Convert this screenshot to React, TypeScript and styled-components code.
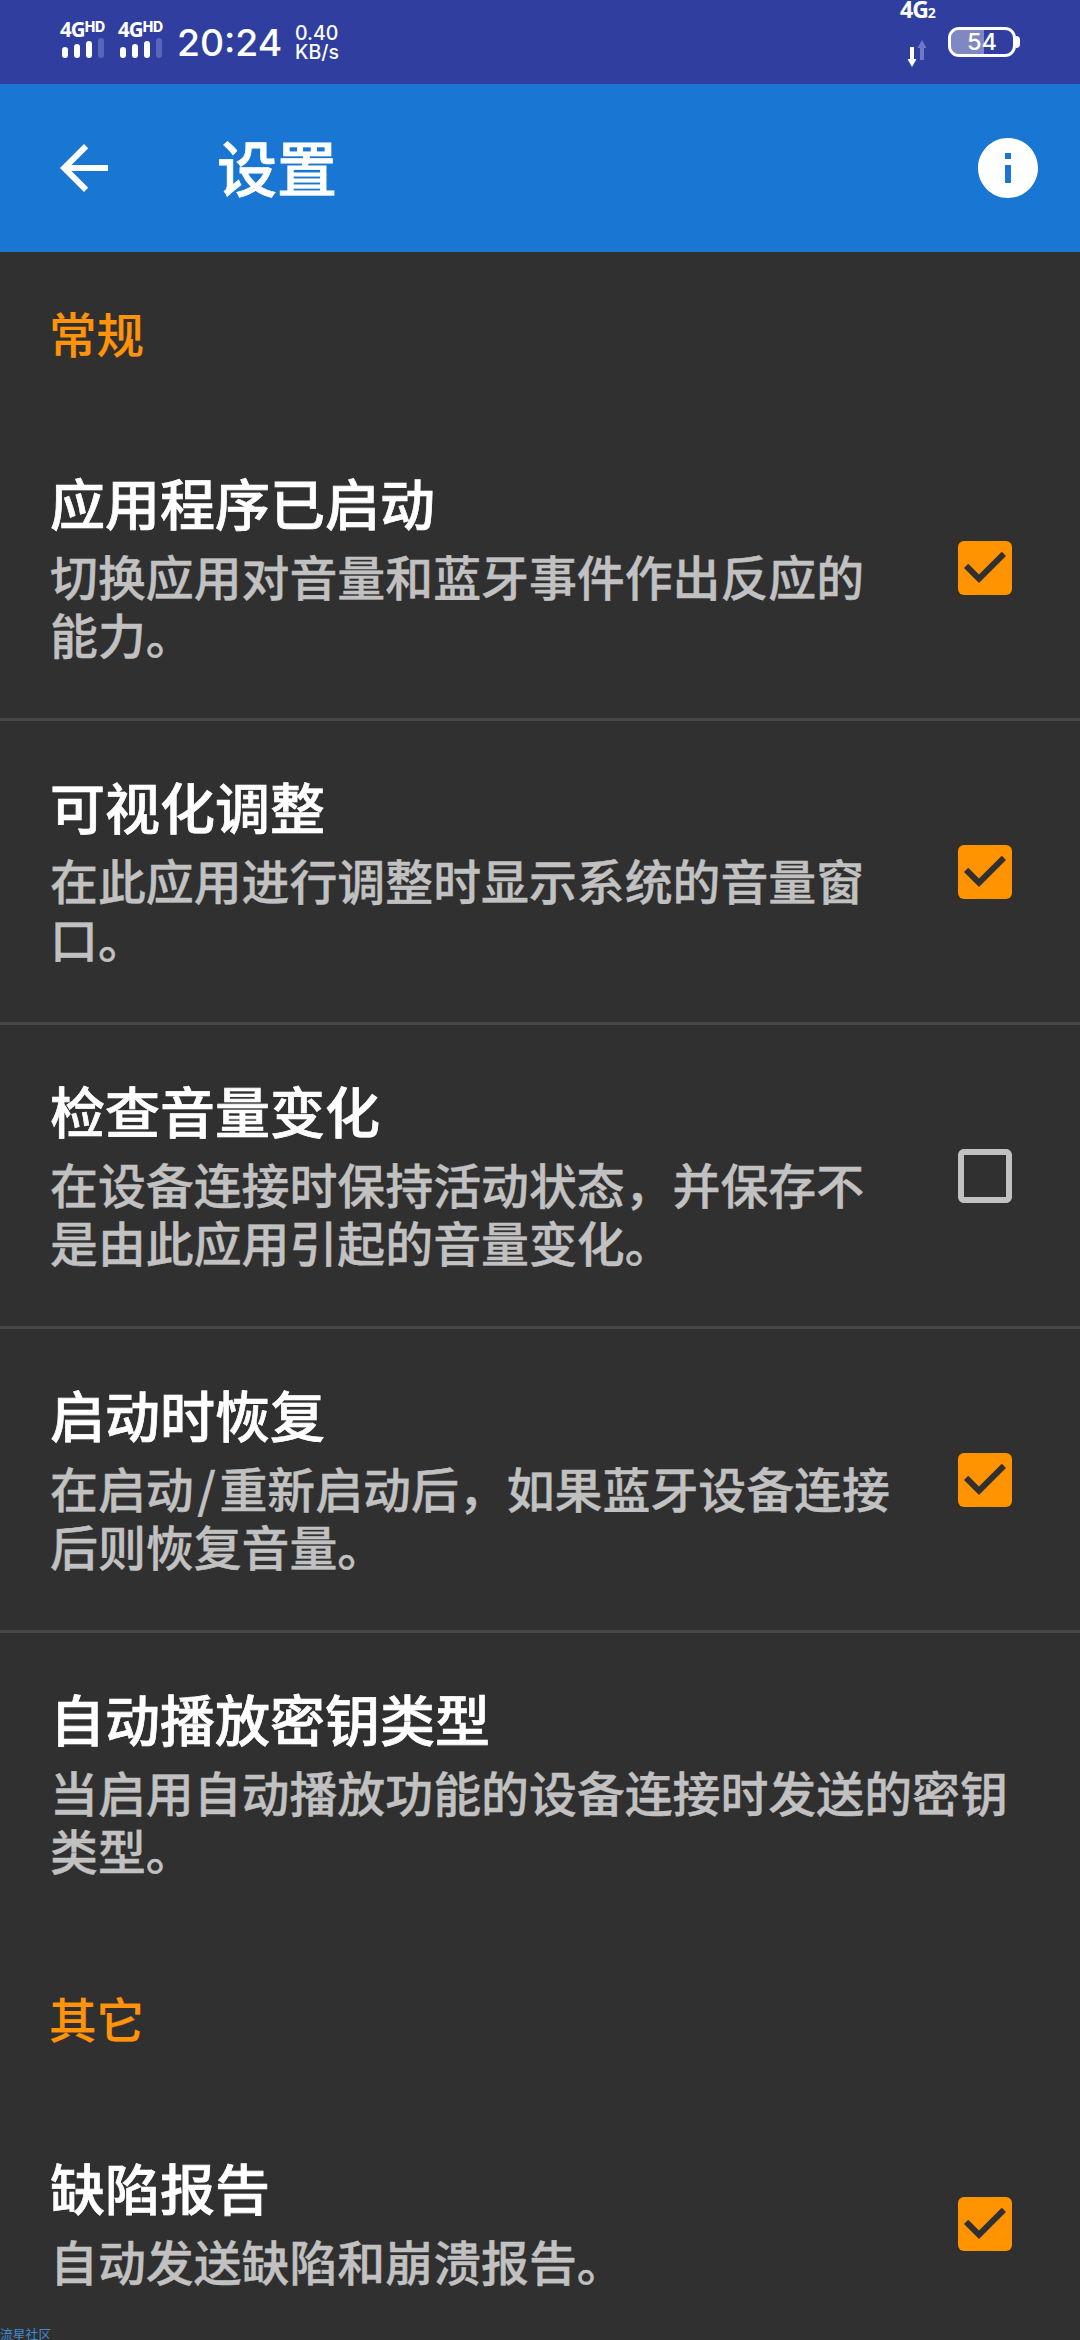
import React, { useState } from "react";
import styled, { createGlobalStyle } from "styled-components";

const GlobalStyle = createGlobalStyle`
  * { box-sizing: border-box; }
  html, body { margin: 0; padding: 0; background: #303030; overflow: hidden; }
`;

const Screen = styled.div`
  position: relative;
  width: 1080px;
  height: 2340px;
  overflow: hidden;
  background: #303030;
  font-family: "Noto Sans CJK SC", "Noto Sans", sans-serif;
  font-weight: 500;
`;

const StatusBar = styled.header`
  display: flex;
  align-items: flex-start;
  height: 84px;
  padding: 0 60px;
  background: #303f9f;
  color: #fff;
  font-family: Inter, Roboto, sans-serif;
`;

const Signal = styled.div`
  width: 58px;
  padding-top: 21px;
`;

const NetworkLabel = styled.div`
  display: flex;
  align-items: flex-start;
  height: 17px;
  font-family: "Open Sans", sans-serif;
  font-size: 20.5px;
  font-weight: 700;
  line-height: 17px;
  letter-spacing: -0.9px;
`;

const NetworkSuffix = styled.span`
  font-family: Inter, sans-serif;
  font-size: 14px;
  font-weight: 800;
  line-height: 12px;
  letter-spacing: -0.2px;
`;

const Bars = styled.div`
  display: flex;
  align-items: flex-end;
  gap: 6px;
  height: 20px;
  padding-left: 2px;
`;

const Bar = styled.i<{ $height: number; $dim?: boolean }>`
  width: 6px;
  height: ${(p) => p.$height}px;
  border-radius: 3px;
  background: ${(p) => (p.$dim ? "#5965b9" : "#fff")};
`;

const Clock = styled.div`
  margin-left: 1px;
  width: 118px;
  padding-top: 20px;
  font-size: 37.3px;
  font-weight: 500;
  line-height: 45px;
  white-space: nowrap;
`;

const Speed = styled.div`
  padding-top: 24px;
  font-size: 19.5px;
  font-weight: 500;
  line-height: 19px;
`;

const StatusEnd = styled.div`
  display: flex;
  align-items: flex-start;
  margin-left: auto;
`;

const DataColumn = styled.div`
  width: 48px;
`;

const DataLabel = styled.div`
  height: 40px;
  font-family: "Open Sans", sans-serif;
  font-size: 23px;
  font-weight: 700;
  line-height: 19px;
  letter-spacing: -1px;
`;

const DataSub = styled.span`
  font-size: 14px;
`;

const Arrows = styled.svg`
  display: block;
  margin-left: 7px;
`;

const BatteryShell = styled.div`
  display: flex;
  align-items: center;
  margin-top: 27px;
`;

const Battery = styled.div`
  width: 68px;
  height: 30px;
  border: 3px solid #fff;
  border-radius: 11px;
  background: linear-gradient(to right, #7f88c3 54%, transparent 54%);
  background-clip: padding-box;
  text-align: center;
  font-size: 23.5px;
  font-weight: 500;
  line-height: 24px;
`;

const BatteryTip = styled.i`
  width: 4px;
  height: 12px;
  border-radius: 0 5px 5px 0;
  background: #fff;
`;

const AppBar = styled.nav`
  display: flex;
  align-items: center;
  height: 168px;
  padding: 0 36px 0 48px;
  background: #1976d2;
  color: #fff;
`;

const IconButton = styled.button`
  display: flex;
  padding: 0;
  border: 0;
  background: none;
  color: inherit;
`;

const Heading = styled.h1`
  flex: 1;
  margin: 0 0 0 97px;
  padding-bottom: 5px;
  font-size: 60px;
  font-weight: 500;
  line-height: 84px;
  -webkit-text-stroke: 0.8px currentColor;
`;

const Section = styled.h2`
  margin: 0;
  height: 165px;
  padding: 48px 49px 0;
  color: #ff9309;
  font-size: 47.5px;
  font-weight: 500;
  line-height: 66px;
  -webkit-text-stroke: 0.2px currentColor;
`;

const Row = styled.div<{ $divider: boolean }>`
  display: flex;
  align-items: center;
  gap: 45px;
  padding: 51px 68px 56px 50px;
  border-bottom: 3px solid ${(p) => (p.$divider ? "#484848" : "transparent")};
`;

const RowText = styled.div<{ $wide: boolean }>`
  flex: none;
  width: ${(p) => (p.$wide ? 980 : 850)}px;
`;

const Title = styled.div`
  color: #fff;
  font-size: 55px;
  line-height: 66px;
  -webkit-text-stroke: 0.7px currentColor;
`;

const Description = styled.p`
  margin: 12px 0 0;
  color: #c1c1c1;
  font-size: 47.9px;
  line-height: 58px;
  -webkit-text-stroke: 0.4px currentColor;
`;

const Slash = styled.span`
  display: inline-block;
  padding: 0 3.5px;
`;

const BoxButton = styled.button`
  display: flex;
  margin: 5px 0 0 auto;
  padding: 0;
  border: 0;
  background: none;
`;

const Watermark = styled.div`
  position: absolute;
  left: 0;
  bottom: -1px;
  color: #3f8bd2;
  font-size: 12.8px;
  font-weight: 400;
  line-height: 15px;
`;

type Item = { title: string; text: React.ReactNode; checked?: boolean };

const general: Item[] = [
  { title: "应用程序已启动", text: "切换应用对音量和蓝牙事件作出反应的能力。", checked: true },
  { title: "可视化调整", text: "在此应用进行调整时显示系统的音量窗口。", checked: true },
  { title: "检查音量变化", text: "在设备连接时保持活动状态，并保存不是由此应用引起的音量变化。", checked: false },
  {
    title: "启动时恢复",
    text: (
      <>
        在启动<Slash>/</Slash>重新启动后，如果蓝牙设备连接后则恢复音量。
      </>
    ),
    checked: true,
  },
  { title: "自动播放密钥类型", text: "当启用自动播放功能的设备连接时发送的密钥类型。" },
];

const other: Item[] = [
  { title: "缺陷报告", text: "自动发送缺陷和崩溃报告。", checked: true },
];

function Checkbox({ initial }: { initial: boolean }) {
  const [on, setOn] = useState(initial);
  return (
    <BoxButton role="checkbox" aria-checked={on} onClick={() => setOn(!on)}>
      <svg width="54" height="54" viewBox="3 3 18 18">
        {on ? (
          <>
            <rect x="3" y="3" width="18" height="18" rx="2" fill="#ff9300" />
            <path d="M10 17l-5-5 1.41-1.41L10 14.17l7.59-7.59L19 8z" fill="#303030" />
          </>
        ) : (
          <path
            d="M19 5v14H5V5h14m0-2H5c-1.100 0-2 .9-2 2v14c0 1.100.9 2 2 2h14c1.100 0 2-.9 2-2V5c0-1.100-.9-2-2-2z"
            fill="#c1c1c1"
          />
        )}
      </svg>
    </BoxButton>
  );
}

function List({ items }: { items: Item[] }) {
  return (
    <>
      {items.map((item, i) => (
        <Row key={item.title} $divider={i < items.length - 1}>
          <RowText $wide={item.checked === undefined}>
            <Title>{item.title}</Title>
            <Description>{item.text}</Description>
          </RowText>
          {item.checked !== undefined && <Checkbox initial={item.checked} />}
        </Row>
      ))}
    </>
  );
}

function SignalMeter() {
  return (
    <Signal>
      <NetworkLabel>
        4G<NetworkSuffix>HD</NetworkSuffix>
      </NetworkLabel>
      <Bars>
        <Bar $height={11} />
        <Bar $height={14} />
        <Bar $height={17} />
        <Bar $height={20} $dim />
      </Bars>
    </Signal>
  );
}

export default function App() {
  return (
    <Screen>
      <GlobalStyle />
      <StatusBar>
        <SignalMeter />
        <SignalMeter />
        <Clock>20:24</Clock>
        <Speed>
          0.40
          <br />
          KB/s
        </Speed>
        <StatusEnd>
          <DataColumn>
            <DataLabel>
              4G<DataSub>2</DataSub>
            </DataLabel>
            <Arrows width="20" height="28" viewBox="0 0 20 28">
              <path d="M3 7h4v12h2.5L5 27 .5 19H3z" fill="#fff" />
              <path d="M13 20h4V8h2.5L15 0l-4.5 8H13z" fill="#6f79c8" />
            </Arrows>
          </DataColumn>
          <BatteryShell>
            <Battery>54</Battery>
            <BatteryTip />
          </BatteryShell>
        </StatusEnd>
      </StatusBar>
      <AppBar>
        <IconButton aria-label="返回">
          <svg width="72" height="72" viewBox="0 0 24 24">
            <path d="M20 11H7.83l5.59-5.59L12 4l-8 8 8 8 1.41-1.41L7.83 13H20v-2z" fill="#fff" />
          </svg>
        </IconButton>
        <Heading>设置</Heading>
        <IconButton aria-label="信息">
          <svg width="72" height="72" viewBox="0 0 24 24">
            <path
              d="M12 2C6.48 2 2 6.48 2 12s4.48 10 10 10 10-4.48 10-10S17.52 2 12 2zm1 15h-2v-6h2v6zm0-8h-2V7h2v2z"
              fill="#fff"
            />
          </svg>
        </IconButton>
      </AppBar>
      <Section>常规</Section>
      <List items={general} />
      <Section>其它</Section>
      <List items={other} />
      <Watermark>流星社区</Watermark>
    </Screen>
  );
}
